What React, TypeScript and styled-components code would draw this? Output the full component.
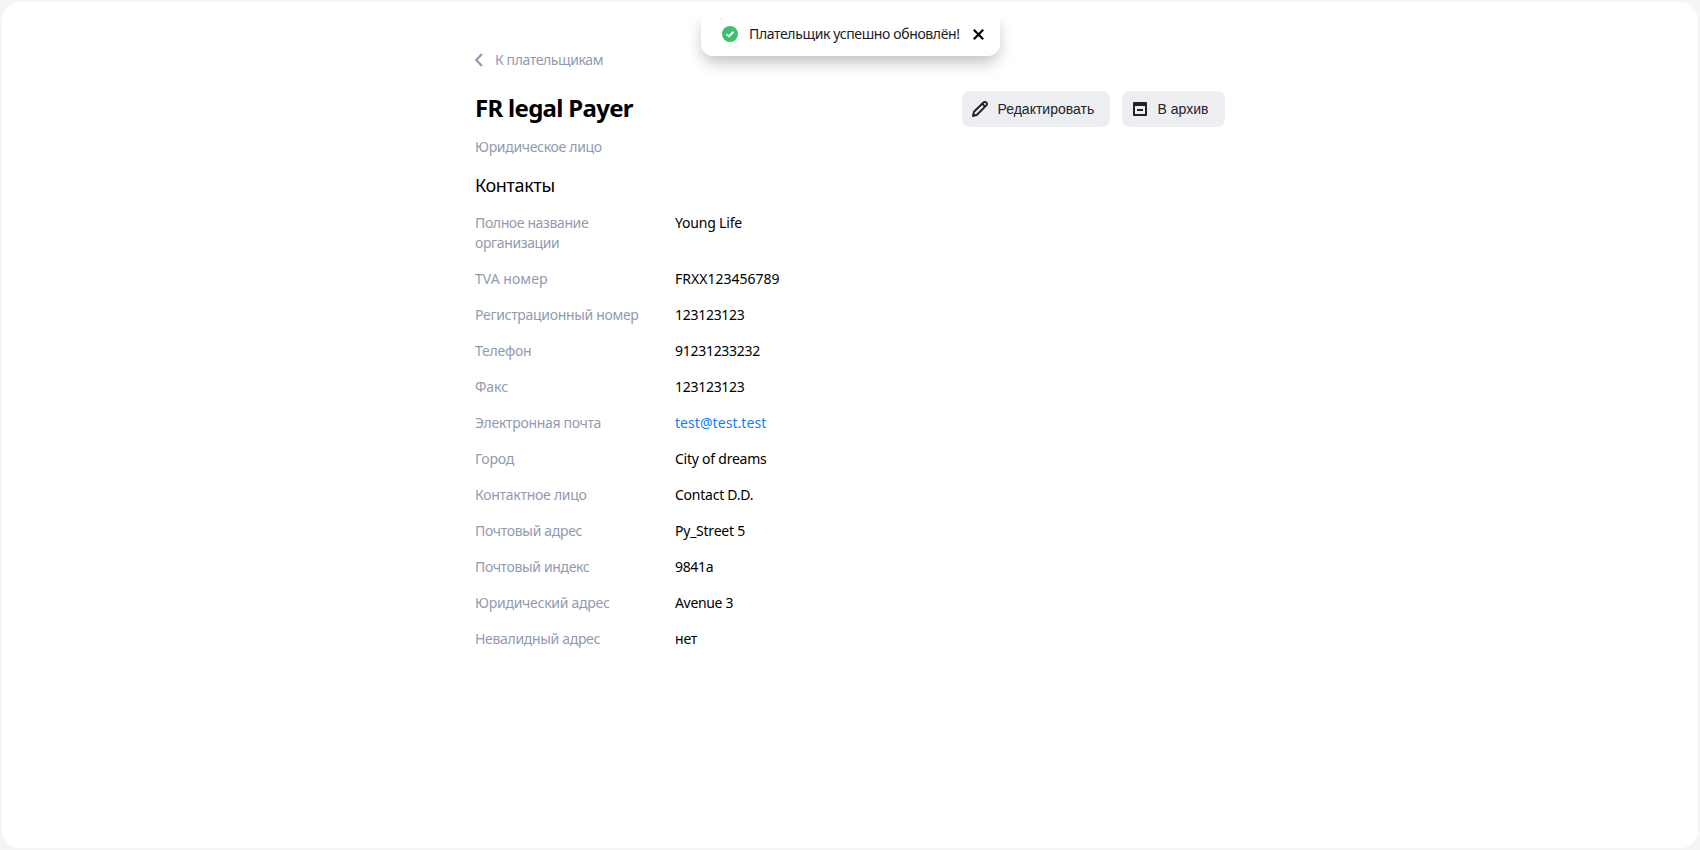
import React from 'react';
import styled, { createGlobalStyle } from 'styled-components';

const GlobalStyle = createGlobalStyle`
  * { box-sizing: border-box; }
  body {
    margin: 0;
    background: #f5f5f7;
    color: #000;
    font: 14px/20px "Noto Sans", sans-serif;
    letter-spacing: -0.32px;
  }
`;

const Page = styled.div`
  height: 100vh;
  padding: 2px;
`;

const Sheet = styled.main`
  height: 100%;
  background: #fff;
  border-radius: 18px;
  padding-top: 48px;
`;

const Content = styled.div`
  width: 750px;
  margin: 0 auto;
`;

const BackLink = styled.a`
  display: flex;
  align-items: center;
  height: 20px;
  gap: 11px;
  color: #929ab1;
  letter-spacing: -0.4px;
  svg { display: block; }
`;

const Header = styled.header`
  display: flex;
  align-items: center;
  justify-content: space-between;
  margin-top: 21px;
  height: 36px;
`;

const Title = styled.h1`
  margin: 0;
  padding-bottom: 2px;
  font-size: 24px;
  line-height: 32px;
  font-weight: 700;
  letter-spacing: -0.7px;
`;

const Actions = styled.div`
  display: flex;
  gap: 12px;
`;

const Button = styled.button<{ $width: number }>`
  display: flex;
  align-items: center;
  width: ${(p) => p.$width}px;
  height: 36px;
  padding: 0 0 0 8px;
  gap: 7.5px;
  border: 0;
  border-radius: 8px;
  background: #edeef2;
  color: #21222e;
  font: 14px/20px "Liberation Sans", Arial, sans-serif;
  letter-spacing: 0;
  svg { flex: none; }
`;

const Kind = styled.div`
  margin-top: 10px;
  color: #929ab1;
`;

const SectionTitle = styled.h2`
  margin: 15px 0 0;
  font-size: 18px;
  line-height: 26px;
  font-weight: 400;
  letter-spacing: -0.36px;
`;

const Fields = styled.dl`
  display: flex;
  flex-direction: column;
  gap: 16px;
  margin: 15px 0 0;
`;

const Field = styled.div`
  display: grid;
  grid-template-columns: 180px 1fr;
  column-gap: 20px;
`;

const Label = styled.dt<{ $tracking?: number }>`
  color: #929ab1;
  letter-spacing: ${(p) => p.$tracking ?? -0.32}px;
`;

const Value = styled.dd<{ $tracking?: number }>`
  margin: 0;
  letter-spacing: ${(p) => p.$tracking ?? -0.24}px;
`;

const MailLink = styled.a`
  color: #0f80fa;
  text-decoration: none;
`;

const Toast = styled.div`
  position: absolute;
  top: 12px;
  left: 701px;
  display: flex;
  align-items: center;
  width: 299px;
  height: 44px;
  padding-left: 21px;
  border-radius: 12px;
  background: #fff;
  color: #21201f;
  box-shadow: 0 8px 16px -2px rgba(0, 0, 0, 0.26);
  clip-path: inset(6px -30px -40px -30px);
  svg { flex: none; }
`;

const ToastText = styled.span`
  flex: none;
  width: 224px;
  margin-left: 11px;
  padding-bottom: 1px;
  white-space: nowrap;
  letter-spacing: -0.37px;
`;

const ToastDot = styled.i`
  position: absolute;
  top: 6px;
  left: 19px;
  width: 2px;
  height: 2px;
  background: #f1f1f1;
`;

type FieldData = {
  label: string;
  value: string;
  mail?: boolean;
  labelTracking?: number;
  tracking?: number;
};

const fields: FieldData[] = [
  { label: 'Полное название организации', value: 'Young Life', tracking: -0.19, labelTracking: -0.38 },
  { label: 'TVA номер', value: 'FRXX123456789', labelTracking: 0.04, tracking: 0 },
  { label: 'Регистрационный номер', value: '123123123', tracking: -0.28 },
  { label: 'Телефон', value: '91231233232', labelTracking: -0.23, tracking: -0.28 },
  { label: 'Факс', value: '123123123', labelTracking: -0.08, tracking: -0.28 },
  { label: 'Электронная почта', value: 'test@test.test', mail: true, tracking: 0.06 },
  { label: 'Город', value: 'City of dreams', labelTracking: -0.22 },
  { label: 'Контактное лицо', value: 'Contact D.D.', labelTracking: -0.27 },
  { label: 'Почтовый адрес', value: 'Py_Street 5' },
  { label: 'Почтовый индекс', value: '9841a', tracking: -0.34, labelTracking: -0.36 },
  { label: 'Юридический адрес', value: 'Avenue 3', labelTracking: -0.26, tracking: -0.33 },
  { label: 'Невалидный адрес', value: 'нет', tracking: -0.2 },
];

export default function App() {
  return (
    <Page>
      <GlobalStyle />
      <Sheet>
        <Content>
          <BackLink>
            <svg width="9" height="14" viewBox="0 0 9 14" fill="none" stroke="#929ab1" strokeWidth="2.2">
              <path d="M7 1 1.3 7l5.7 6" />
            </svg>
            К плательщикам
          </BackLink>
          <Header>
            <Title>FR legal Payer</Title>
            <Actions>
              <Button $width={148}>
                <svg width="20" height="20" viewBox="0 0 20 20" fill="none" stroke="#21222e" strokeWidth="2" strokeLinejoin="round">
                  <path d="M3 17l1-4.3 9.4-9.2a2 2 0 0 1 2.9 0 2 2 0 0 1 0 2.9L7 15.7Z" />
                  <path d="M12.2 4.8l2.8 2.8" />
                </svg>
                Редактировать
              </Button>
              <Button $width={103}>
                <svg width="20" height="20" viewBox="0 0 20 20" fill="#21222e">
                  <path fillRule="evenodd" d="M4 3h12a1 1 0 0 1 1 1v12a1 1 0 0 1-1 1H4a1 1 0 0 1-1-1V4a1 1 0 0 1 1-1Zm1 4v8h10V7Z" />
                  <path d="M7 10h6v2H7z" />
                </svg>
                В архив
              </Button>
            </Actions>
          </Header>
          <Kind>Юридическое лицо</Kind>
          <SectionTitle>Контакты</SectionTitle>
          <Fields>
            {fields.map((f) => (
              <Field key={f.label}>
                <Label $tracking={f.labelTracking}>{f.label}</Label>
                <Value $tracking={f.tracking}>
                  {f.mail ? <MailLink href={`mailto:${f.value}`}>{f.value}</MailLink> : f.value}
                </Value>
              </Field>
            ))}
          </Fields>
        </Content>
      </Sheet>
      <Toast role="status">
        <ToastDot />
        <svg width="16" height="16" viewBox="0 0 16 16">
          <circle cx="8" cy="8" r="8" fill="#3cc06c" />
          <path d="M4.5 8.1l2.4 2.3 4.6-4.6" fill="none" stroke="#fff" strokeWidth="2" />
        </svg>
        <ToastText>Плательщик успешно обновлён!</ToastText>
        <svg width="11" height="11" viewBox="0 0 11 11" fill="none" stroke="#000" strokeWidth="2.2">
          <path d="M.8.8l9.4 9.4M10.2.8L.8 10.2" />
        </svg>
      </Toast>
    </Page>
  );
}
